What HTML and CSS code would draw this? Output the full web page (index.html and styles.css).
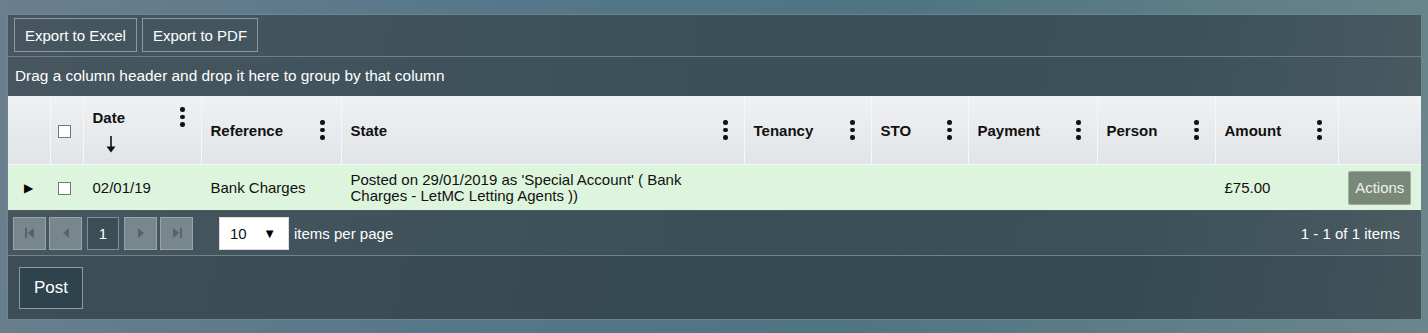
FILE: index.html
```html
<!DOCTYPE html>
<html lang="en">
<head>
  <meta charset="UTF-8">
  <title>Transactions</title>
  <link rel="stylesheet" href="styles.css">
</head>
<body>
  <div class="grid-panel">
    <div class="grid-toolbar">
      <button class="tool-btn">Export to Excel</button>
      <button class="tool-btn">Export to PDF</button>
    </div>
    <div class="group-area">Drag a column header and drop it here to group by that column</div>

    <table class="grid">
      <colgroup>
        <col style="width:42px"><col style="width:33px"><col style="width:118px">
        <col style="width:140px"><col style="width:403px"><col style="width:127px">
        <col style="width:97px"><col style="width:129px"><col style="width:118px">
        <col style="width:123px"><col style="width:83px">
      </colgroup>
      <thead>
        <tr>
          <th></th>
          <th class="center check-cell"><span class="check"></span></th>
          <th>
            <div class="th-line"><span>Date</span><span class="dots"><i></i><i></i><i></i></span></div>
            <div class="sort-arrow"><svg width="10" height="17" viewBox="0 0 10 17"><path d="M5 0 V15" stroke="#111" stroke-width="1.6"/><path d="M0.5 10.5 L5 16.5 L9.5 10.5 Z" fill="#111"/></svg></div>
          </th>
          <th><div class="th-line"><span>Reference</span><span class="dots"><i></i><i></i><i></i></span></div></th>
          <th><div class="th-line"><span>State</span><span class="dots"><i></i><i></i><i></i></span></div></th>
          <th><div class="th-line"><span>Tenancy</span><span class="dots"><i></i><i></i><i></i></span></div></th>
          <th><div class="th-line"><span>STO</span><span class="dots"><i></i><i></i><i></i></span></div></th>
          <th><div class="th-line"><span>Payment</span><span class="dots"><i></i><i></i><i></i></span></div></th>
          <th><div class="th-line"><span>Person</span><span class="dots"><i></i><i></i><i></i></span></div></th>
          <th><div class="th-line"><span>Amount</span><span class="dots"><i></i><i></i><i></i></span></div></th>
          <th></th>
        </tr>
      </thead>
      <tbody>
        <tr>
          <td class="center"><span class="expand">&#9654;</span></td>
          <td class="center check-cell"><span class="check"></span></td>
          <td>02/01/19</td>
          <td>Bank Charges</td>
          <td>Posted on 29/01/2019 as 'Special Account' ( Bank<br>Charges - LetMC Letting Agents ))</td>
          <td></td>
          <td></td>
          <td></td>
          <td></td>
          <td>&pound;75.00</td>
          <td class="center"><button class="actions-btn">Actions</button></td>
        </tr>
      </tbody>
    </table>

    <div class="pager">
      <div class="pager-nav">
        <span class="pg-btn disabled"><svg width="10" height="10" viewBox="0 0 10 10"><rect x="0" y="0" width="2" height="10" fill="#55646b"/><path d="M9 0 L2.5 5 L9 10 Z" fill="#55646b"/></svg></span>
        <span class="pg-btn disabled"><svg width="8" height="10" viewBox="0 0 8 10"><path d="M7 0 L1 5 L7 10 Z" fill="#55646b"/></svg></span>
        <span class="pg-btn current">1</span>
        <span class="pg-btn disabled"><svg width="8" height="10" viewBox="0 0 8 10"><path d="M1 0 L7 5 L1 10 Z" fill="#55646b"/></svg></span>
        <span class="pg-btn disabled"><svg width="10" height="10" viewBox="0 0 10 10"><path d="M1 0 L7.5 5 L1 10 Z" fill="#55646b"/><rect x="8" y="0" width="2" height="10" fill="#55646b"/></svg></span>
        <span class="page-size">10 <span class="caret">&#9660;</span></span>
        <span class="pager-label">items per page</span>
      </div>
      <div class="pager-info">1 - 1 of 1 items</div>
    </div>

    <div class="panel-footer">
      <button class="post-btn">Post</button>
    </div>
  </div>
</body>
</html>
```

FILE: styles.css
```css
body {
  margin: 0;
  min-height: 333px;
  background: linear-gradient(100deg, #6a7f8e 0%, #557789 35%, #4f7482 60%, #6b868c 100%);
  font-family: 'Liberation Sans', Arial, sans-serif;
  color: #fff;
  padding-top: 14px;
  box-sizing: border-box;
}

.grid-panel {
  margin: 0 6px 0 7px;
  border: 1px solid #6f858e;
  background: linear-gradient(100deg, #47565f 0%, #3a5059 50%, #3b5158 80%, #4b5b62 100%);
}

.grid-toolbar {
  display: flex;
  gap: 5px;
  padding: 3px 6px 4px;
  border-bottom: 1px solid #6d8089;
}

.tool-btn {
  height: 34px;
  padding: 0 10px;
  background: transparent;
  border: 1px solid #8a9aa1;
  color: #fff;
  font-family: inherit;
  font-size: 15px;
}

.group-area {
  height: 39px;
  line-height: 38px;
  padding-left: 7px;
  font-size: 15.4px;
}

.grid {
  width: 1413px;
  table-layout: fixed;
  border-collapse: collapse;
  font-size: 15px;
  color: #111;
}

.grid th {
  height: 68px;
  padding: 0 16px 0 9px;
  text-align: left;
  font-weight: bold;
  background: linear-gradient(#eff1f3, #e1e4e7);
  border-left: 1px solid #f6f7f8;
  border-bottom: 1px solid #f4f5f6;
  vertical-align: middle;
}

.grid th:first-child,
.grid td:first-child {
  border-left: none;
}

.th-line {
  display: flex;
  justify-content: space-between;
  align-items: center;
}

.dots {
  display: flex;
  flex-direction: column;
  gap: 3px;
}

.dots i {
  display: block;
  width: 4.5px;
  height: 4.5px;
  border-radius: 50%;
  background: #111;
}

.sort-arrow {
  margin: 9px 0 0 13px;
  line-height: 0;
}

.grid td {
  height: 45px;
  padding: 0 9px;
  background: #ddf5dc;
  border-left: 1px solid #e9ece9;
  line-height: 16px;
  vertical-align: middle;
}

.grid .center {
  text-align: center;
  padding: 0;
}

.grid .check-cell {
  padding-right: 4px;
}

.check {
  display: inline-block;
  width: 11px;
  height: 11px;
  border: 1px solid #777;
  background: #fff;
  vertical-align: middle;
}

.expand {
  font-size: 12px;
  color: #000;
}

.actions-btn {
  height: 34px;
  padding: 0 6px;
  background: #7a887a;
  border: 1px solid #a3aca3;
  border-radius: 2px;
  color: #eef1ee;
  font-family: inherit;
  font-size: 15px;
}

.pager {
  display: flex;
  justify-content: space-between;
  align-items: center;
  height: 44px;
  padding: 0 21px 0 5px;
  border-top: 1px solid #4d5d63;
  border-bottom: 1px solid #6f838b;
}

.pager-nav {
  display: flex;
  align-items: center;
  gap: 3px;
}

.pg-btn {
  display: flex;
  align-items: center;
  justify-content: center;
  width: 31px;
  height: 31px;
  border: 1px solid #97a4aa;
  background: #78878e;
  font-size: 15px;
}

.pg-btn.current {
  width: 30px;
  background: #3c4d56;
  border-color: #7f8f96;
  margin: 0 2px;
}

.page-size {
  display: flex;
  align-items: center;
  justify-content: space-between;
  width: 70px;
  height: 33px;
  box-sizing: border-box;
  margin-left: 23px;
  padding: 0 12px 0 10px;
  background: #fff;
  border: 1px solid #ddd;
  color: #111;
  font-size: 15px;
}

.caret {
  font-size: 13px;
  color: #000;
}

.pager-label,
.pager-info {
  font-size: 15px;
  margin-left: 2px;
}

.panel-footer {
  height: 63px;
  padding: 11px 0 0 11px;
  box-sizing: border-box;
  background: rgba(40, 55, 65, 0.25);
}

.post-btn {
  height: 42px;
  padding: 0 14px;
  background: #2f434d;
  border: 1px solid #8a9aa1;
  color: #fff;
  font-family: inherit;
  font-size: 17px;
}
```
